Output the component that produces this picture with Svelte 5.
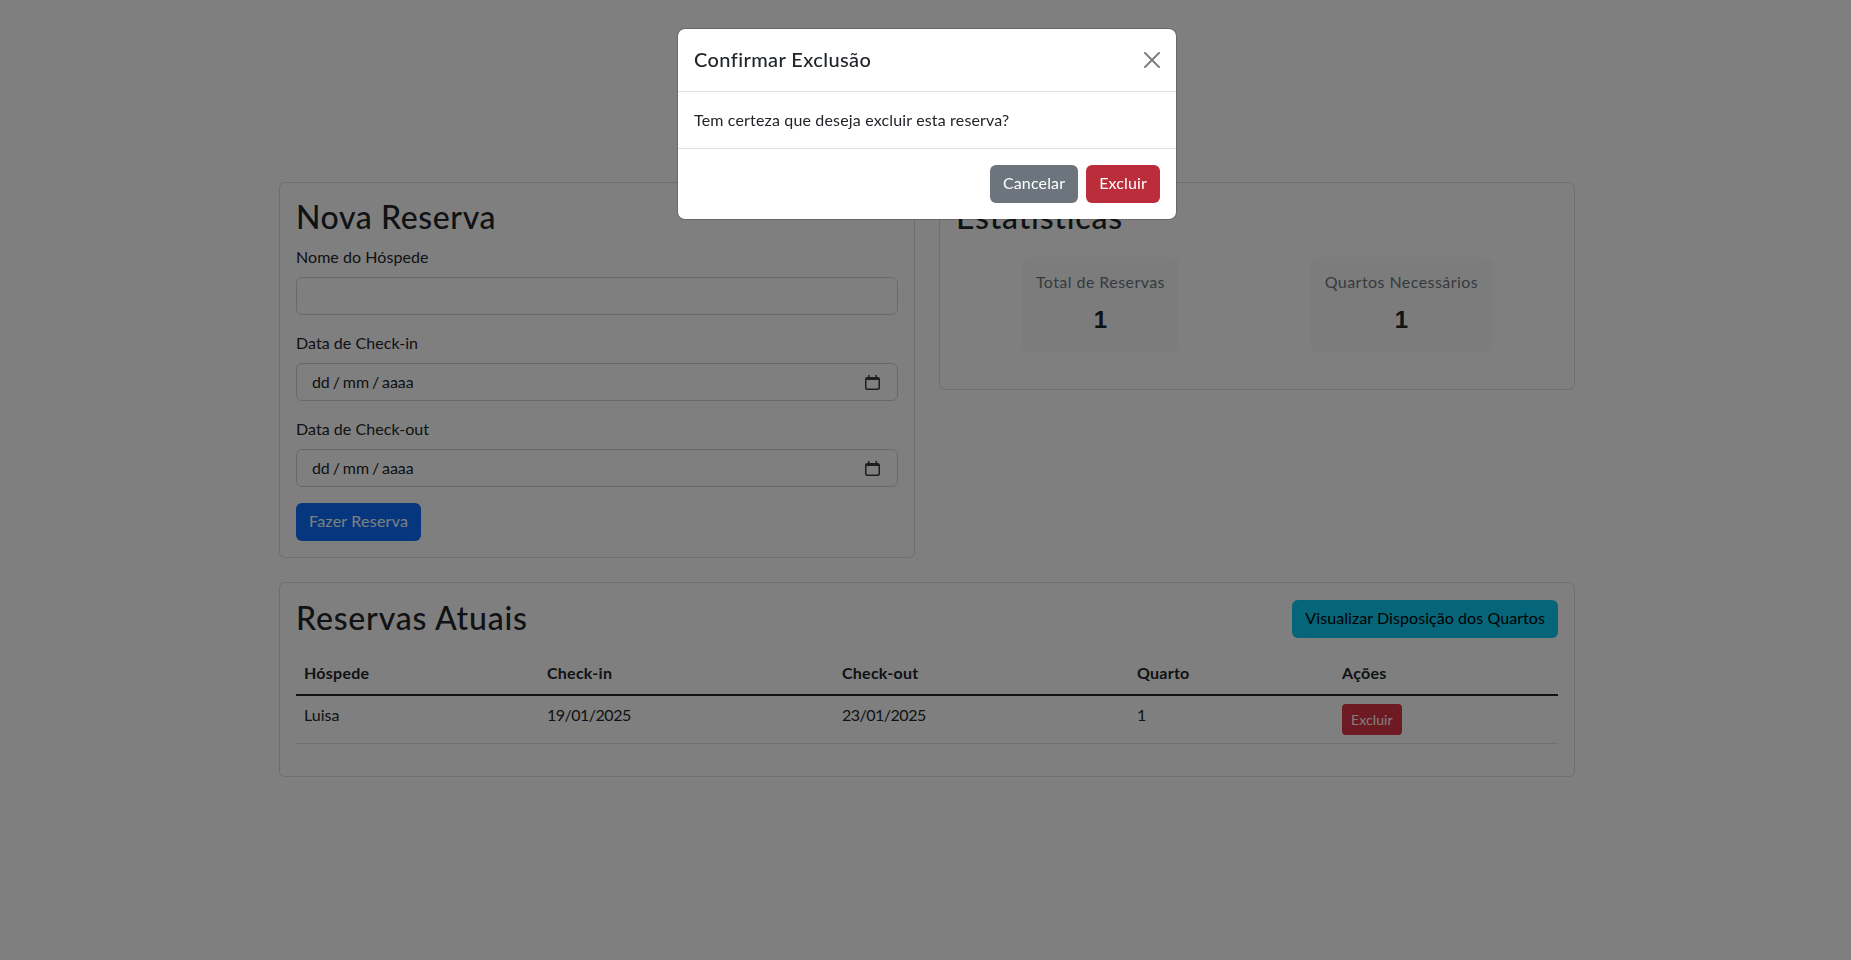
<script>
	const columns = ['Hóspede', 'Check-in', 'Check-out', 'Quarto', 'Ações'];
	const widths = [243, 295, 295, 205, 224];
	const reservas = [{ nome: 'Luisa', checkIn: '19/01/2025', checkOut: '23/01/2025', quarto: 1 }];
	const stats = [
		{ label: 'Total de Reservas', value: 1 },
		{ label: 'Quartos Necessários', value: 1 }
	];
	const datas = ['Data de Check-in', 'Data de Check-out'];
</script>

<div class="page">
	<div class="container">
		<div class="row">
			<section class="card">
				<h2 class="card-title">Nova Reserva</h2>
				<div class="field">
					<label for="nome">Nome do Hóspede</label>
					<input id="nome" class="control" type="text" />
				</div>
				{#each datas as data}
					<div class="field">
						<span class="label">{data}</span>
						<div class="control date">
							<span class="date-text">dd / mm / aaaa</span>
							<svg class="calendar" width="15" height="15" viewBox="0 0 15 15" fill="#3c3c3c">
								<path d="M3 0h1.5v2h6V0H12v2h.8A2.2 2.2 0 0 1 15 4.200v8.600a2.200 2.200 0 0 1-2.200 2.200H2.200A2.200 2.200 0 0 1 0 12.800V4.200A2.200 2.200 0 0 1 2.200 2H3V0zm-1.500 5v7.600c0 .5.400.900.900.900h10.200c.5 0 .900-.400.900-.900V5H1.500z" fill-rule="evenodd" />
							</svg>
						</div>
					</div>
				{/each}
				<button class="btn primary">Fazer Reserva</button>
			</section>

			<section class="card">
				<h2 class="card-title stats-title">Estatísticas</h2>
				<div class="stats">
					{#each stats as stat}
						<div class="stat">
							<div class="stat-label">{stat.label}</div>
							<div class="stat-value">{stat.value}</div>
						</div>
					{/each}
				</div>
			</section>
		</div>

		<section class="card">
			<div class="list-head">
				<h2>Reservas Atuais</h2>
				<button class="btn info">Visualizar Disposição dos Quartos</button>
			</div>
			<table>
				<colgroup>
					{#each widths as w}
						<col style="width: {w}px" />
					{/each}
				</colgroup>
				<thead>
					<tr>
						{#each columns as col}
							<th>{col}</th>
						{/each}
					</tr>
				</thead>
				<tbody>
					{#each reservas as r}
						<tr>
							<td>{r.nome}</td>
							<td class="num">{r.checkIn}</td>
							<td class="num">{r.checkOut}</td>
							<td>{r.quarto}</td>
							<td class="actions"><button class="btn danger small">Excluir</button></td>
						</tr>
					{/each}
				</tbody>
			</table>
		</section>
	</div>
</div>

<div class="backdrop"></div>

<div class="modal-wrap">
	<div class="modal">
		<div class="modal-header">
			<h5>Confirmar Exclusão</h5>
			<button class="close" aria-label="Close">
				<svg width="16" height="16" viewBox="0 0 16 16" fill="#000">
					<path d="M.293.293a1 1 0 0 1 1.414 0L8 6.586 14.293.293a1 1 0 1 1 1.414 1.414L9.414 8l6.293 6.293a1 1 0 0 1-1.414 1.414L8 9.414l-6.293 6.293a1 1 0 0 1-1.414-1.414L6.586 8 .293 1.707a1 1 0 0 1 0-1.414z" />
				</svg>
			</button>
		</div>
		<div class="modal-body">Tem certeza que deseja excluir esta reserva?</div>
		<div class="modal-footer">
			<button class="btn secondary">Cancelar</button>
			<button class="btn danger-focus">Excluir</button>
		</div>
	</div>
</div>

<style>
	:global(body) {
		background: #fff;
		color: #212529;
		font-family: Lato, "Noto Sans", sans-serif;
		font-size: 16px;
		line-height: 1.5;
		overflow: hidden;
	}

	* {
		box-sizing: border-box;
	}

	.page {
		padding: 182px 0 0 3px;
		min-height: 960px;
	}

	.container {
		width: 1296px;
		margin: 0 auto;
	}

	.row {
		display: grid;
		grid-template-columns: 1fr 1fr;
		gap: 24px;
		align-items: start;
		margin-bottom: 24px;
	}

	.card {
		background: #fff;
		border: 1px solid rgba(0, 0, 0, 0.125);
		border-radius: 6px;
		padding: 16px;
	}

	h2 {
		font-size: 32px;
		font-weight: 500;
		line-height: 1.2;
		margin: 0 0 8px;
		letter-spacing: 0.8px;
	}

	.card-title {
		line-height: 36.4px;
		margin-bottom: 10px;
		letter-spacing: 0.6px;
	}

	.stats-title {
		letter-spacing: 0.8px;
	}

	.field {
		margin-bottom: 16px;
	}

	label,
	.label {
		display: block;
		margin-bottom: 8px;
		letter-spacing: 0.05px;
	}

	.control {
		display: block;
		width: 100%;
		height: 38px;
		padding: 6px 12px;
		font: inherit;
		color: #212529;
		background: #fff;
		border: 1px solid #ced4da;
		border-radius: 6px;
	}

	.date {
		display: flex;
		align-items: center;
		justify-content: space-between;
		padding: 6px 17px 6px 15px;
	}

	.date-text {
		letter-spacing: -0.1px;
		word-spacing: -1px;
	}

	.calendar {
		display: block;
	}

	.btn {
		display: inline-block;
		height: 38px;
		padding: 5px 12px 7px;
		font: inherit;
		border: 1px solid transparent;
		border-radius: 6px;
		cursor: pointer;
	}

	.primary {
		background: #0d6efd;
		color: #fff;
		letter-spacing: 0.23px;
	}

	.info {
		background: #0dcaf0;
		color: #000;
		letter-spacing: 0.07px;
	}

	.danger {
		background: #dc3545;
		color: #fff;
	}

	.danger-focus {
		background: #bb2d3b;
		color: #fff;
		letter-spacing: 0.14px;
	}

	.secondary {
		background: #6c757d;
		color: #fff;
		letter-spacing: 0.15px;
	}

	.small {
		height: 31px;
		padding: 4px 8px;
		font-size: 14px;
		line-height: 1.5;
		border-radius: 4px;
		letter-spacing: 0.1px;
	}

	.stats {
		display: flex;
		justify-content: space-around;
		margin: 22px 0 20px;
	}

	.stat {
		background: #f8f9fa;
		border-radius: 8px;
		padding: 13px 14px;
		text-align: center;
	}

	.stat-label {
		color: #6c757d;
		margin-bottom: 8px;
		letter-spacing: 0.44px;
	}

	.stat-value {
		font-family: "Liberation Sans", sans-serif;
		font-size: 24px;
		font-weight: 700;
		line-height: 36px;
		margin-bottom: 2px;
	}

	.list-head {
		display: flex;
		align-items: center;
		justify-content: space-between;
		margin-bottom: 16px;
	}

	.list-head h2 {
		margin: 0;
	}

	table {
		width: 100%;
		table-layout: fixed;
		border-collapse: collapse;
		margin-bottom: 16px;
	}

	th {
		text-align: left;
		font-weight: 700;
		padding: 7px 8px 9px;
		border-bottom: 2px solid #212529;
		letter-spacing: 0.25px;
	}

	td {
		padding: 7px 8px 9px;
		vertical-align: top;
		border-bottom: 1px solid #dee2e6;
	}

	td.actions {
		padding: 8px;
	}

	.num {
		letter-spacing: -0.5px;
	}

	.backdrop {
		position: fixed;
		inset: 0;
		background: #000;
		opacity: 0.5;
	}

	.modal-wrap {
		position: fixed;
		inset: 0;
		padding: 28px 0 0 3px;
	}

	.modal {
		width: 500px;
		margin: 0 auto;
		background: #fff;
		border: 1px solid rgba(0, 0, 0, 0.175);
		border-radius: 8px;
		background-clip: padding-box;
	}

	.modal-header {
		display: flex;
		align-items: center;
		justify-content: space-between;
		padding: 16px;
		border-bottom: 1px solid #dee2e6;
	}

	h5 {
		margin: 0 0 2px;
		font-size: 20px;
		font-weight: 500;
		line-height: 28px;
		letter-spacing: 0.4px;
	}

	.close {
		display: block;
		padding: 4px;
		margin-right: -4px;
		background: none;
		border: 0;
		opacity: 0.5;
		line-height: 0;
	}

	.modal-body {
		padding: 16px;
		border-bottom: 1px solid #dee2e6;
		letter-spacing: 0.16px;
	}

	.modal-footer {
		display: flex;
		justify-content: flex-end;
		gap: 8px;
		padding: 16px;
	}
</style>
